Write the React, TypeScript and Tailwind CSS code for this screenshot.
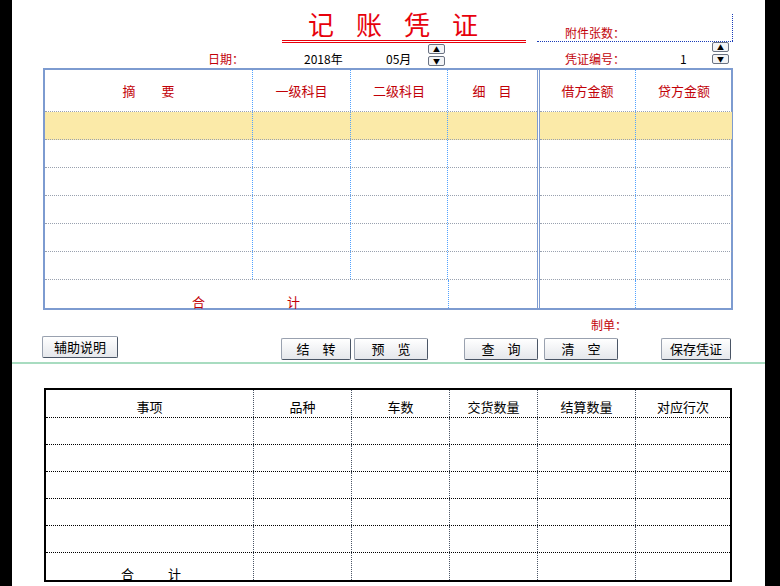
const F = { fontFamily: '"Noto Sans CJK SC", "Liberation Sans", sans-serif' };
const cols = ['w-[208px]', 'w-[98px]', 'w-[97px]', 'w-[88px]'];
const rcols = ['w-[96px]', 'w-[96px]'];

function Spin() {
  return (
    <div className="flex flex-col gap-[2px]">
      {['▲', '▼'].map((g) => (
        <div key={g} className="flex h-[10px] w-[17px] items-center justify-center rounded-[2px] border border-gray-500 bg-gray-100 text-[7px] leading-none text-black">
          {g}
        </div>
      ))}
    </div>
  );
}

function Btn({ label, w }: { label: string; w: string }) {
  return (
    <div className={`flex h-[22px] ${w} items-center justify-center rounded-[2px] border border-gray-400 border-b-gray-600 border-r-gray-600 bg-gradient-to-b from-white to-gray-200 text-[13px] text-black`}>
      {label}
    </div>
  );
}

export default function App() {
  const rows = [true, false, false, false, false, false];
  return (
    <div className="flex h-[586px] w-[780px] bg-black" style={F}>
      <div className="ml-[12px] flex w-[753px] flex-col bg-white">
        {/* header */}
        <div className="relative h-[68px]">
          <div className="absolute left-[270px] top-[8px] w-[244px] border-b-[3px] border-double border-red-600 text-center text-[26px] leading-[32px] tracking-[22px] text-red-600">
            记账凭证
          </div>
          <div className="absolute left-[525px] top-[14px] flex h-[28px] w-[196px] border-b border-dotted border-blue-800">
            <span className="ml-[28px] mt-[10px] text-[12px] text-red-700">附件张数：</span>
            <div className="ml-auto h-full border-r border-dotted border-blue-800" />
          </div>
          <span className="absolute left-[196px] top-[50px] text-[12px] text-red-700">日期：</span>
          <span className="absolute left-[292px] top-[50px] text-[12px] text-black">2018年</span>
          <span className="absolute left-[374px] top-[50px] text-[12px] text-black">05月</span>
          <div className="absolute left-[416px] top-[44px]"><Spin /></div>
          <span className="absolute left-[553px] top-[50px] text-[12px] text-red-700">凭证编号：</span>
          <span className="absolute left-[668px] top-[50px] text-[12px] text-black">1</span>
          <div className="absolute left-[700px] top-[42px]"><Spin /></div>
        </div>
        {/* voucher table */}
        <div className="ml-[31px] flex w-[690px] border-2 border-[#7d9bd0]">
          <div className="flex flex-col border-r-[3px] border-double border-[#7d9bd0]">
            <div className="flex h-[42px] border-b border-dotted border-gray-400 text-[13px] text-red-700">
              {['摘　　要', '一级科目', '二级科目', '细　目'].map((t, i) => (
                <div key={t} className={`${cols[i]} flex items-center justify-center ${i < 3 ? 'border-r border-dotted border-blue-400' : ''}`}>{t}</div>
              ))}
            </div>
            {rows.map((y, r) => (
              <div key={r} className={`flex h-[28px] border-b border-dotted border-gray-400 ${y ? 'bg-[#fbeaa8]' : ''}`}>
                {cols.map((c, i) => (
                  <div key={i} className={`${c} ${i < 3 ? 'border-r border-dotted border-blue-400' : ''}`} />
                ))}
              </div>
            ))}
            <div className="flex h-[28px]">
              <div className="flex w-[404px] items-end border-r border-dotted border-blue-400 pb-[0px] text-[13px] leading-none text-red-700">
                <span className="ml-[147px]">合</span>
                <span className="ml-[82px]">计</span>
              </div>
              <div className="w-[88px]" />
            </div>
          </div>
          <div className="flex flex-col">
            <div className="flex h-[42px] border-b border-dotted border-gray-400 text-[13px] text-red-700">
              {['借方金额', '贷方金额'].map((t, i) => (
                <div key={t} className={`${rcols[i]} flex items-center justify-center ${i === 0 ? 'border-r border-dotted border-blue-400' : ''}`}>{t}</div>
              ))}
            </div>
            {[...rows, false].map((y, r) => (
              <div key={r} className={`flex h-[28px] ${r < 6 ? 'border-b border-dotted border-gray-400' : ''} ${y ? 'bg-[#fbeaa8]' : ''}`}>
                <div className="w-[96px] border-r border-dotted border-blue-400" />
                <div className="w-[92px]" />
              </div>
            ))}
          </div>
        </div>
        <div className="ml-[579px] mt-[6px] text-[12px] text-red-700">制单：</div>
        <div className="mt-[2px] flex h-[26px] items-start">
          <div className="ml-[30px]"><Btn label="辅助说明" w="w-[76px]" /></div>
          <div className="ml-[163px] mt-[2px]"><Btn label="结　转" w="w-[70px]" /></div>
          <div className="ml-[3px] mt-[2px]"><Btn label="预　览" w="w-[74px]" /></div>
          <div className="ml-[36px] mt-[2px]"><Btn label="查　询" w="w-[74px]" /></div>
          <div className="ml-[6px] mt-[2px]"><Btn label="清　空" w="w-[74px]" /></div>
          <div className="ml-[43px] mt-[2px]"><Btn label="保存凭证" w="w-[70px]" /></div>
        </div>
        <div className="flex-1 border-t-2 border-[#a8dcc0] pt-[24px]">
          <div className="ml-[32px] w-[688px] border-2 border-black text-[13px] text-black">
            <div className="flex h-[28px] border-b border-dotted border-black">
              {['事项', '品种', '车数', '交货数量', '结算数量', '对应行次'].map((t, i) => (
                <div key={t} className={`${['w-[208px]', 'w-[98px]', 'w-[98px]', 'w-[88px]', 'w-[98px]', 'w-[94px]'][i]} flex items-end justify-center pb-[1px] ${i < 5 ? 'border-r border-dotted border-gray-600' : ''}`}>{t}</div>
              ))}
            </div>
            {[0, 1, 2, 3, 4, 5].map((r) => (
              <div key={r} className={`flex h-[27px] ${r < 5 ? 'border-b border-dotted border-black' : ''}`}>
                {['w-[208px]', 'w-[98px]', 'w-[98px]', 'w-[88px]', 'w-[98px]', 'w-[94px]'].map((w, i) => (
                  <div key={i} className={`${w} ${i < 5 ? 'border-r border-dotted border-gray-600' : ''} flex items-end`}>
                    {r === 5 && i === 0 ? (
                      <span className="mb-[0px] ml-[75px] leading-none">合<span className="ml-[34px]">计</span></span>
                    ) : null}
                  </div>
                ))}
              </div>
            ))}
          </div>
        </div>
      </div>
    </div>
  );
}
